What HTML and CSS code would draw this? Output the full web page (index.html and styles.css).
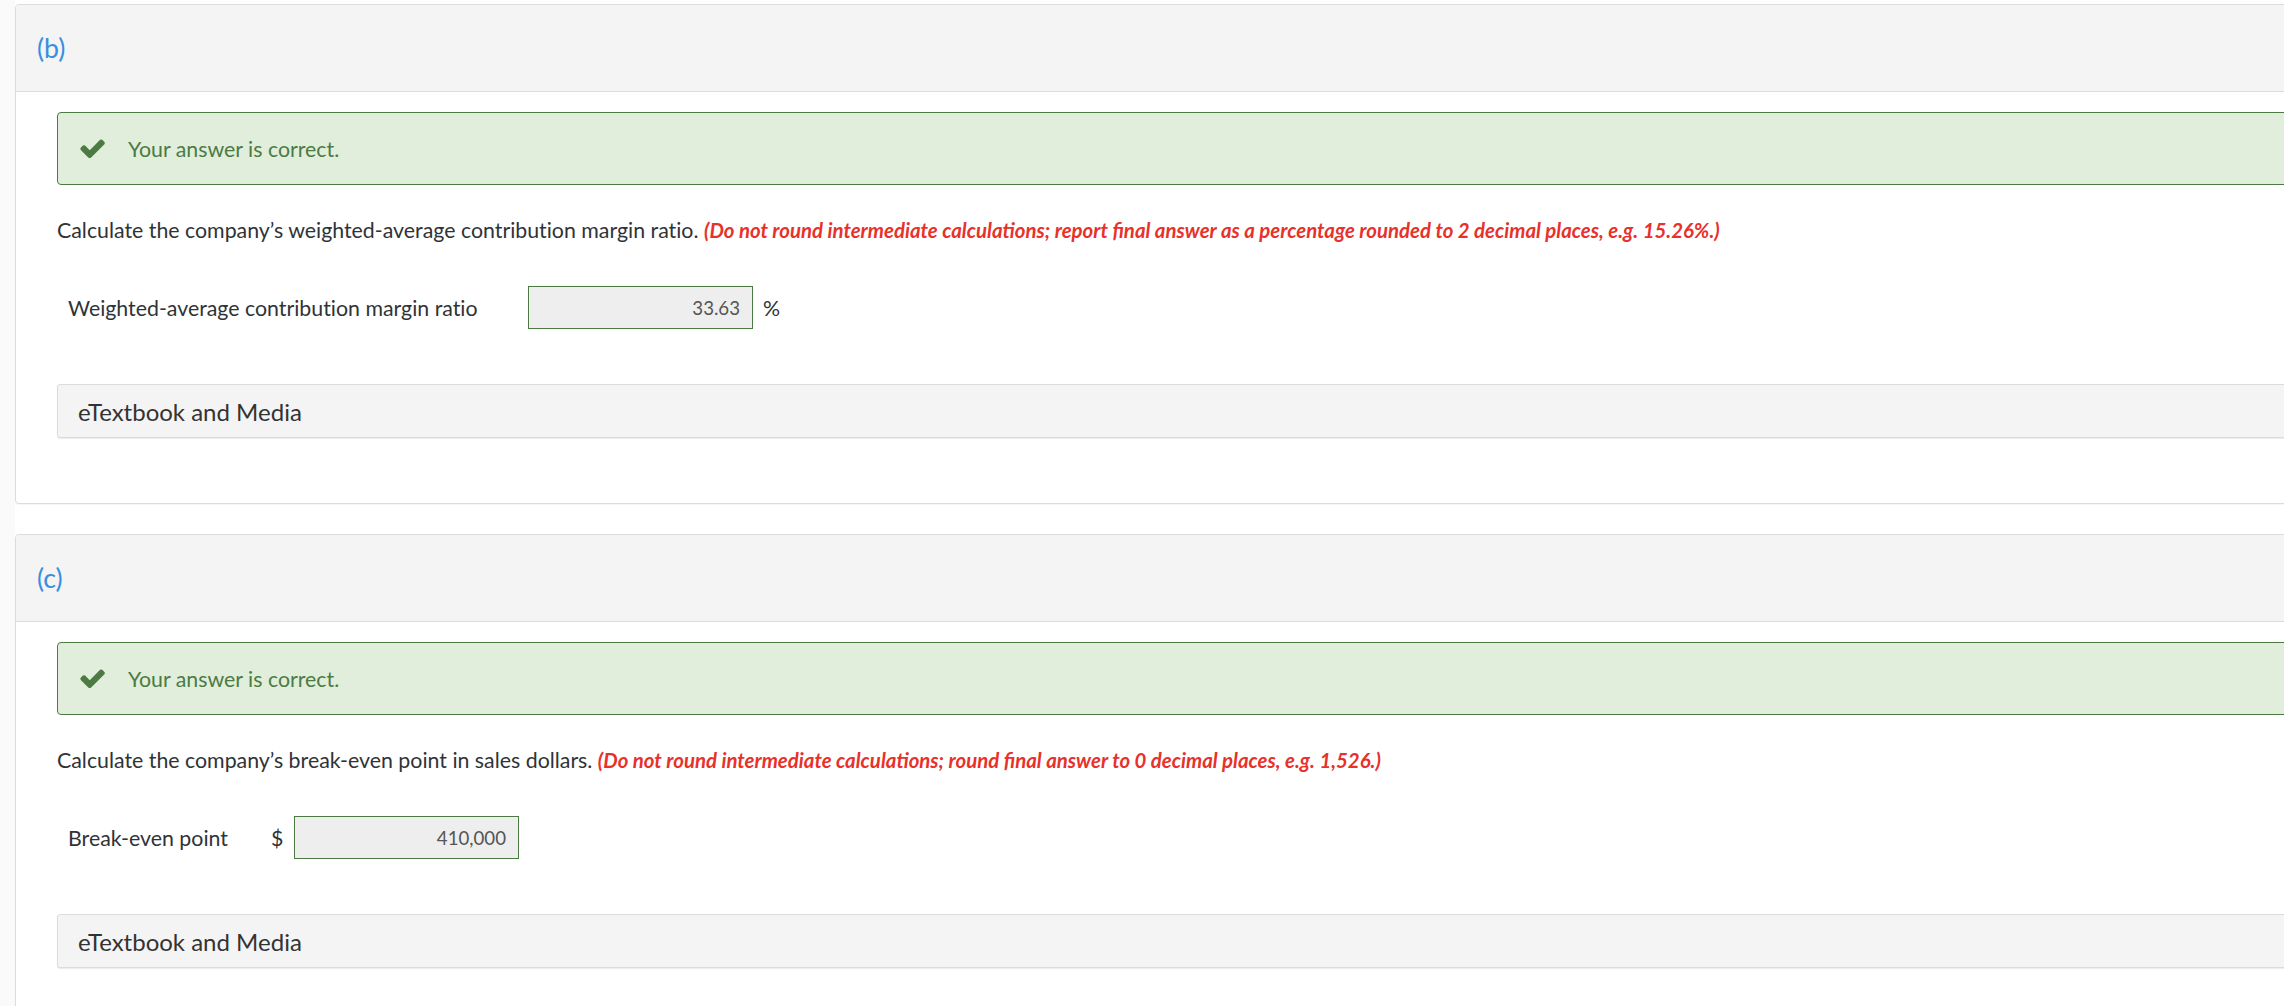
FILE: index.html
```html
<!DOCTYPE html>
<html lang="en">
<head>
<meta charset="utf-8">
<title>Questions</title>
<link rel="stylesheet" href="styles.css">
</head>
<body>
<div class="main">
  <section class="card">
    <div class="card-header"><span class="part-label">(b)</span></div>
    <div class="card-body">
      <div class="alert">
        <svg class="check" viewBox="100 350 1580 1115" width="25" height="19"><path d="M1671 566q0 40-28 68l-724 724-136 136q-28 28-68 28t-68-28l-136-136-362-362q-28-28-28-68t28-68l136-136q28-28 68-28t68 28l294 295 656-657q28-28 68-28t68 28l136 136q28 28 28 68z"/></svg>
        <span class="alert-text">Your answer is correct.</span>
      </div>
      <p class="question">Calculate the company’s weighted-average contribution margin ratio. <em class="hint">(Do not round intermediate calculations; report final answer as a percentage rounded to 2 decimal places, e.g. 15.26%.)</em></p>
      <div class="answer-row">
        <span class="answer-label label-wide">Weighted-average contribution margin ratio</span>
        <span class="input-box">33.63</span>
        <span class="unit">%</span>
      </div>
      <div class="media">eTextbook and Media</div>
    </div>
  </section>
  <section class="card">
    <div class="card-header"><span class="part-label">(c)</span></div>
    <div class="card-body">
      <div class="alert">
        <svg class="check" viewBox="100 350 1580 1115" width="25" height="19"><path d="M1671 566q0 40-28 68l-724 724-136 136q-28 28-68 28t-68-28l-136-136-362-362q-28-28-28-68t28-68l136-136q28-28 68-28t68 28l294 295 656-657q28-28 68-28t68 28l136 136q28 28 28 68z"/></svg>
        <span class="alert-text">Your answer is correct.</span>
      </div>
      <p class="question">Calculate the company’s break-even point in sales dollars. <em class="hint">(Do not round intermediate calculations; round final answer to 0 decimal places, e.g. 1,526.)</em></p>
      <div class="answer-row">
        <span class="answer-label label-narrow">Break-even point</span>
        <span class="currency">$</span>
        <span class="input-box">410,000</span>
      </div>
      <div class="media">eTextbook and Media</div>
    </div>
  </section>
</div>
</body>
</html>
```
FILE: styles.css
```css
html, body {
  margin: 0;
  padding: 0;
}
body {
  background: #fafafa;
  font-family: Lato, "Open Sans", "Liberation Sans", sans-serif;
  font-variant-ligatures: no-common-ligatures;
  color: #333;
  overflow: hidden;
  width: 2284px;
  height: 1006px;
}
.main {
  margin-left: 15px;
  width: 2400px;
  min-height: 1006px;
  background: #fff;
  padding-top: 4px;
  box-sizing: border-box;
}
.card {
  border: 1px solid #dcdcdc;
  border-radius: 4px;
  background: #fff;
  margin-bottom: 30px;
  box-shadow: 0 1px 1px rgba(0,0,0,0.04);
}
.card-header {
  height: 86px;
  background: #f4f4f4;
  border-bottom: 1px solid #dcdcdc;
  display: flex;
  align-items: center;
  padding-left: 21px;
  border-radius: 4px 4px 0 0;
}
.part-label {
  font-size: 26.67px;
  color: #3a8ee0;
}
.card-body {
  padding: 20px 0 65px 41px;
}
.alert {
  height: 71px;
  border: 1px solid #4b7b42;
  border-radius: 4px;
  background: #e1eedb;
  display: flex;
  align-items: center;
  padding-left: 22px;
}
.check {
  fill: #4b7b42;
  margin-right: 23px;
}
.alert-text {
  font-size: 21.33px;
  color: #4b7b42;
}
.question {
  margin: 31px 0 0 0;
  font-size: 21.33px;
  line-height: 28px;
  color: #2f3337;
}
.hint {
  color: #e8312a;
  font-weight: bold;
  font-style: italic;
  font-size: 20.4px;
  font-variant-ligatures: common-ligatures;
}
.answer-row {
  display: flex;
  align-items: center;
  margin-top: 42px;
  padding-left: 11px;
  font-size: 21.33px;
  color: #2f3337;
}
.label-wide {
  width: 460px;
}
.label-narrow {
  width: 203px;
}
.currency {
  width: 23px;
}
.input-box {
  box-sizing: border-box;
  width: 225px;
  height: 43px;
  border: 1px solid #4b7b42;
  background: #eeeeee;
  color: #555;
  font-size: 18.67px;
  display: flex;
  align-items: center;
  justify-content: flex-end;
  padding-right: 12px;
}
.unit {
  margin-left: 10px;
}
.media {
  margin-top: 55px;
  height: 54px;
  box-sizing: border-box;
  border: 1px solid #dcdcdc;
  border-radius: 3px;
  background: #f4f4f4;
  box-shadow: 0 1px 1px rgba(0,0,0,0.08);
  display: flex;
  align-items: center;
  padding-left: 20px;
  font-size: 24px;
  color: #333;
}
```
